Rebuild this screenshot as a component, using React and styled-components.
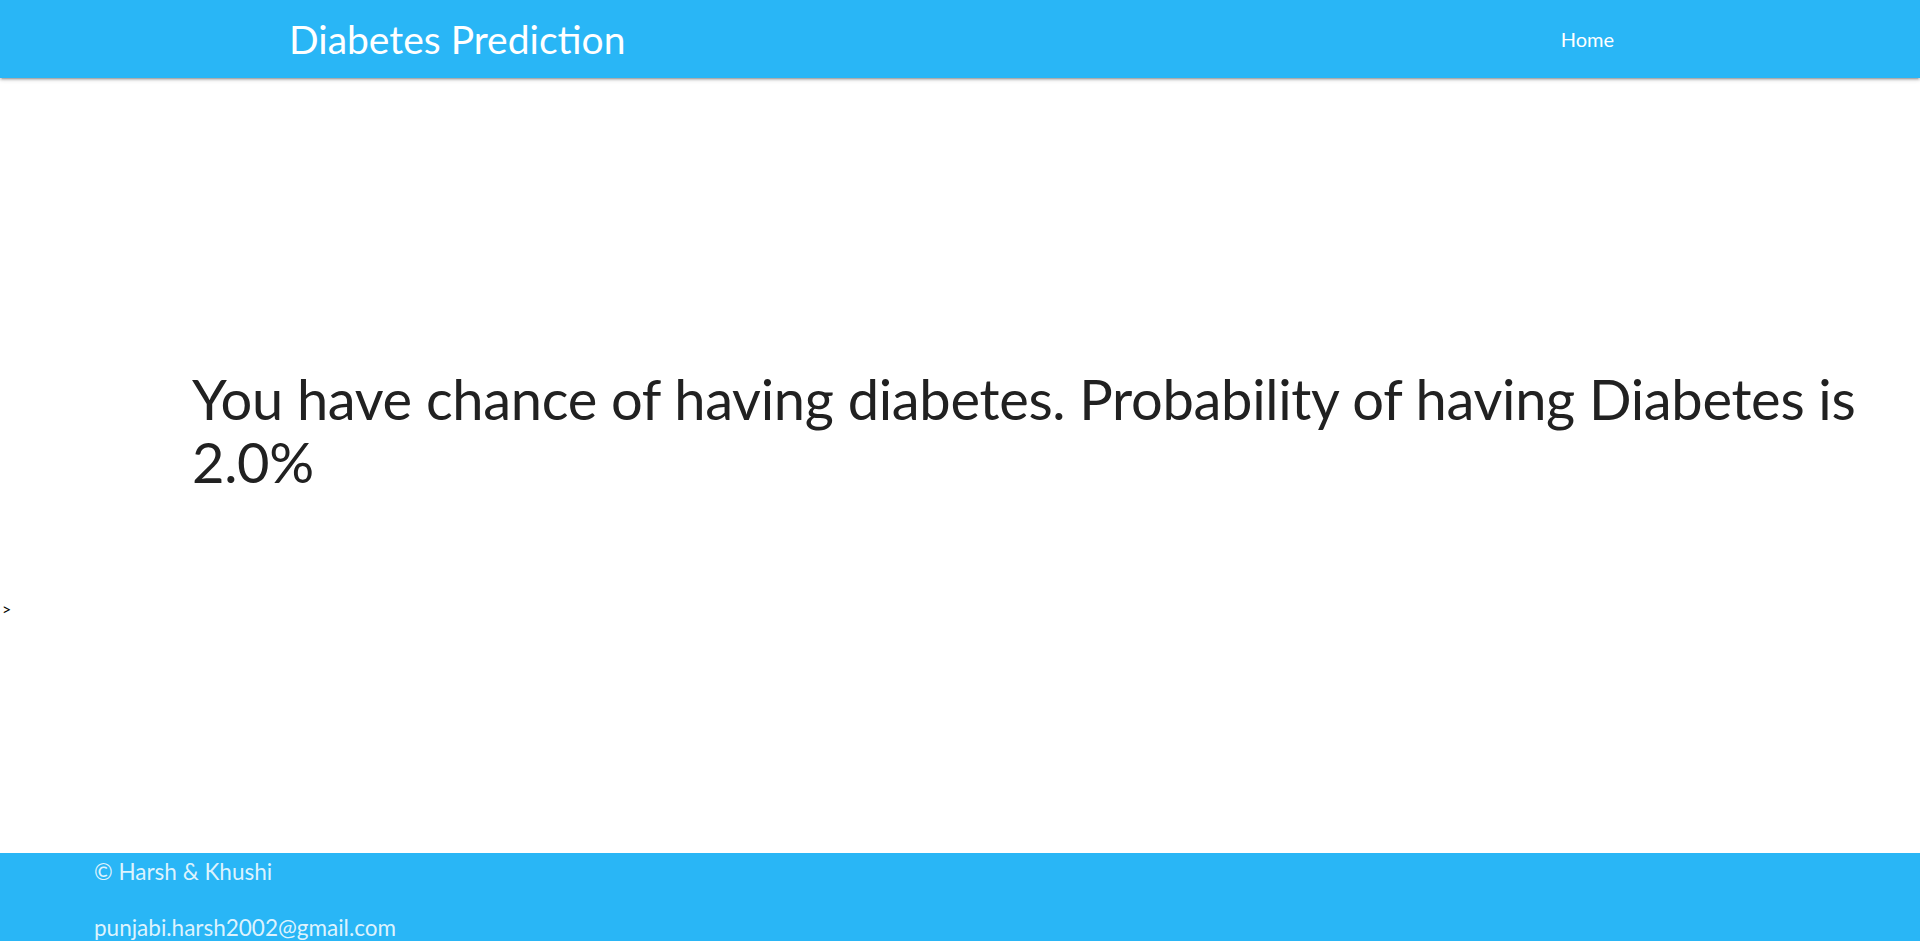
import styled, { createGlobalStyle } from 'styled-components'

const GlobalStyle = createGlobalStyle`
  html, body {
    margin: 0;
    padding: 0;
    background: #ffffff;
    font-family: "Segoe UI", Lato, "Liberation Sans", sans-serif;
    color: rgba(0, 0, 0, 0.87);
  }
`

const Nav = styled.nav`
  height: 78px;
  background-color: #29b6f6;
  box-shadow: 0 2px 2px 0 rgba(0, 0, 0, 0.14), 0 3px 1px -2px rgba(0, 0, 0, 0.12),
    0 1px 5px 0 rgba(0, 0, 0, 0.2);
`

const NavWrapper = styled.div`
  width: 1344px;
  height: 100%;
  margin: 0 auto;
  display: flex;
  align-items: center;
  justify-content: space-between;
`

const Brand = styled.a`
  color: #ffffff;
  font-size: 39px;
  text-decoration: none;
  margin-left: 1px;
`

const NavLink = styled.a`
  color: #ffffff;
  font-size: 20px;
  padding: 0 18px;
  text-decoration: none;
  padding-bottom: 1px;
`

const Main = styled.main`
  padding-top: 289px;
`

const Result = styled.h3`
  margin: 0 0 0 192px;
  max-width: 1700px;
  font-size: 56px;
  letter-spacing: -0.3px;
  font-weight: 400;
  line-height: 63px;
  color: #212121;
`

const Stray = styled.div`
  margin-top: 106px;
  margin-left: 2px;
  font-size: 16px;
  line-height: 20px;
  color: #000000;
`

const Footer = styled.footer`
  margin-top: 234px;
  background-color: #29b6f6;
  padding: 4px 0 0 94px;
  height: 84px;
  overflow: hidden;
  border-bottom: 1px solid #222;
`

const FooterLine = styled.p`
  margin: 0 0 ${({ gap }) => gap || 0}px;
  font-size: 22.5px;
  line-height: 30px;
  color: rgba(255, 255, 255, 0.85);
`

const App = () => {
  return (
    <>
      <GlobalStyle />
      <Nav>
        <NavWrapper>
          <Brand href="#">Diabetes Prediction</Brand>
          <NavLink href="#">Home</NavLink>
        </NavWrapper>
      </Nav>
      <Main>
        <Result>
          You have chance of having diabetes. Probability of having Diabetes is 2.0%
        </Result>
        <Stray>&gt;</Stray>
      </Main>
      <Footer>
        <FooterLine gap={26}>© Harsh &amp; Khushi</FooterLine>
        <FooterLine>punjabi.harsh2002@gmail.com</FooterLine>
      </Footer>
    </>
  )
}

export default App
